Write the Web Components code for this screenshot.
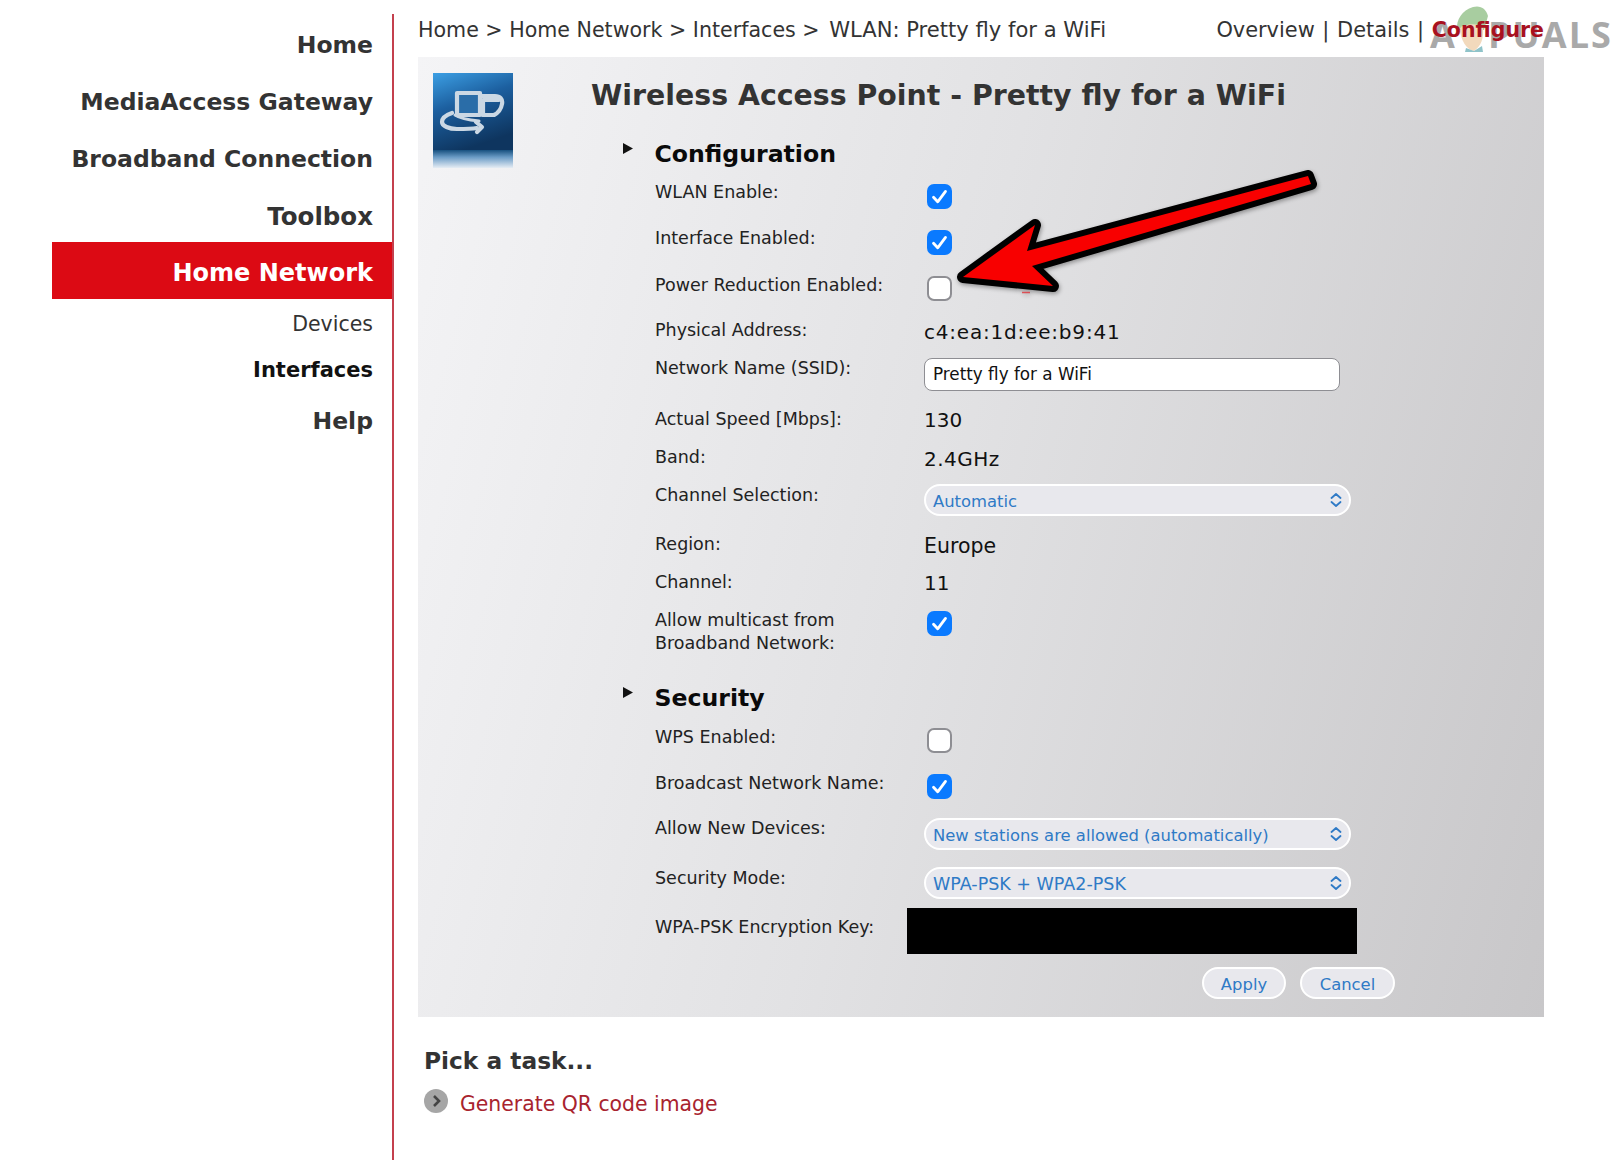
<!DOCTYPE html>
<html lang="en">
<head>
<meta charset="utf-8">
<title>Wireless Access Point</title>
<style>
  html, body { margin: 0; background: #fff; }
  body { font-family: "DejaVu Sans", Verdana, sans-serif; color: #222; }
</style>
</head>
<body>
<gw-app>
  <gw-nav slot="nav" size="big">Home</gw-nav>
  <gw-nav slot="nav" size="big">MediaAccess Gateway</gw-nav>
  <gw-nav slot="nav" size="big">Broadband Connection</gw-nav>
  <gw-nav slot="nav" size="big" style="font-size:24.5px">Toolbox</gw-nav>
  <gw-nav slot="nav" size="big" active style="font-size:24px">Home Network</gw-nav>
  <gw-nav slot="nav" size="sub">Devices</gw-nav>
  <gw-nav slot="nav" size="sub" current>Interfaces</gw-nav>
  <gw-nav slot="nav" size="big" style="line-height:61px">Help</gw-nav>

  <gw-topbar slot="top"></gw-topbar>

  <wifi-panel slot="main" title-text="Wireless Access Point - Pretty fly for a WiFi">
    <wifi-head style="margin-top:19px">Configuration</wifi-head>
    <wifi-row h="46" off="4" label="WLAN Enable:"><wifi-check checked></wifi-check></wifi-row>
    <wifi-row h="47" off="4" label="Interface Enabled:"><wifi-check checked></wifi-check></wifi-row>
    <wifi-row h="45" off="3" label="Power Reduction Enabled:"><wifi-check></wifi-check></wifi-row>
    <wifi-row h="38" off="3" label="Physical Address:"><wifi-value style="letter-spacing:.8px">c4:ea:1d:ee:b9:41</wifi-value></wifi-row>
    <wifi-row h="51" off="2" label="Network Name (SSID):"><wifi-text>Pretty fly for a WiFi</wifi-text></wifi-row>
    <wifi-row h="38" off="2" label="Actual Speed [Mbps]:"><wifi-value>130</wifi-value></wifi-row>
    <wifi-row h="38" off="3" label="Band:"><wifi-value style="letter-spacing:.5px">2.4GHz</wifi-value></wifi-row>
    <wifi-row h="49" off="1" label="Channel Selection:"><wifi-select>Automatic</wifi-select></wifi-row>
    <wifi-row h="38" off="3" label="Region:"><wifi-value style="font-size:20.5px">Europe</wifi-value></wifi-row>
    <wifi-row h="38" off="2" label="Channel:"><wifi-value>11</wifi-value></wifi-row>
    <wifi-row h="73" off="3" label="Allow multicast from Broadband Network:"><wifi-check checked></wifi-check></wifi-row>

    <wifi-head style="margin-bottom:10px">Security</wifi-head>
    <wifi-row h="46" off="3" label="WPS Enabled:"><wifi-check></wifi-check></wifi-row>
    <wifi-row h="45" off="3" label="Broadcast Network Name:"><wifi-check checked></wifi-check></wifi-row>
    <wifi-row h="50" off="2" label="Allow New Devices:"><wifi-select>New stations are allowed (automatically)</wifi-select></wifi-row>
    <wifi-row h="49" off="1" label="Security Mode:"><wifi-select style="font-size:17.5px">WPA-PSK + WPA2-PSK</wifi-select></wifi-row>
    <wifi-row h="52" off="0" label="WPA-PSK Encryption Key:"><wifi-redact></wifi-redact></wifi-row>

    <wifi-actions>
      <wifi-button w="84">Apply</wifi-button>
      <wifi-button w="95">Cancel</wifi-button>
    </wifi-actions>
  </wifi-panel>

  <gw-tasks slot="main" heading="Pick a task...">Generate QR code image</gw-tasks>
</gw-app>

<script>
// shell: sidebar with the red rule, and the main column
class GwApp extends HTMLElement {
  constructor() {
    super();
    this.attachShadow({ mode: 'open' });
    this.shadowRoot.innerHTML = `
      <style>
        :host { display: grid; grid-template-columns: 394px 1225px; padding-top: 14px; height: 1158px; overflow: hidden; width: 1619px; }
        .side { box-sizing: border-box; height: 1146px; margin-left: 52px; border-right: 2px solid #c4404e; }
        .main { padding: 0 75px 0 24px; }
      </style>
      <div class="side"><slot name="nav"></slot></div>
      <div class="main"><slot name="top"></slot><slot name="main"></slot></div>
    `;
  }
}
customElements.define('gw-app', GwApp);

class GwNav extends HTMLElement {
  constructor() {
    super();
    this.attachShadow({ mode: 'open' });
    this.shadowRoot.innerHTML = `
      <style>
        :host { display: block; box-sizing: border-box; height: 57px; line-height: 63px; padding-right: 19px; text-align: right; font-size: 23.5px; font-weight: 700; color: #333; white-space: nowrap; }
        :host([size="sub"]) { height: 46px; line-height: 51px; font-size: 20.5px; font-weight: 400; }
        :host([current]) { font-size: 21px; font-weight: 700; color: #111; }
        :host([active]) { background: #dc0a14; color: #fff; line-height: 62px; }
      </style>
      <slot></slot>
    `;
  }
}
customElements.define('gw-nav', GwNav);

class GwTopbar extends HTMLElement {
  constructor() {
    super();
    this.attachShadow({ mode: 'open' });
    this.shadowRoot.innerHTML = `
      <style>
        :host { display: flex; justify-content: space-between; position: relative; height: 43px; font-size: 20.6px; line-height: 32px; color: #333; white-space: nowrap; }
        b { color: #a8111f; position: relative; font-size: 20.5px; }
        .last { font-size: 21.1px; margin-left: 3px; }
        .mark { position: absolute; left: 1012px; top: -14px; width: 189px; height: 60px; display: block; }
        .mark span { position: absolute; top: 10px; font: 700 36px/50px "Open Sans", sans-serif; color: #a9a9a9; }
        .mark svg { position: absolute; left: 20px; top: 4px; }
        .links { position: relative; font-size: 20.9px; word-spacing: 1px; }
      </style>
      <div>Home &gt; Home Network &gt; Interfaces &gt; <span class="last">WLAN: Pretty fly for a WiFi</span></div>
      <div class="mark">
        <span style="left:0">A</span>
        <svg width="48" height="50" viewBox="0 0 48 50">
          <path d="M7 26C6 16 12 6 23 3c8-2 13 2 15 9l-4 14z" fill="#a8cda0"/>
          <path d="M10 24c6-5 19-5 23 0 1 10-2 18-9 23-7-1-14-11-14-23z" fill="#f2d9bc"/>
          <path d="M16 44l8 3 8-5 1 6H15z" fill="#8fc3c9"/>
        </svg>
        <span style="left:58px;letter-spacing:2px">PUALS</span>
      </div>
      <div class="links">Overview | Details | <b>Configure</b></div>
    `;
  }
}
customElements.define('gw-topbar', GwTopbar);

// grey box with the icon, title, form and the big annotation arrow
class WifiPanel extends HTMLElement {
  constructor() {
    super();
    this.attachShadow({ mode: 'open' });
    this.shadowRoot.innerHTML = `
      <style>
        :host { display: grid; grid-template-columns: 80px 1fr; column-gap: 79px; position: relative; box-sizing: border-box; width: 1126px; height: 960px; padding: 16px 149px 0 15px; background: linear-gradient(105deg, #f4f4f6 0%, #e2e2e4 45%, #c8c7c9 100%); }
        h1 { margin: 0 0 0 -1px; font-size: 28.4px; line-height: 45px; font-weight: 700; color: #333; white-space: nowrap; }
        .icon { display: block; }
        .icon g { filter: blur(.5px); }
        .arrow { position: absolute; left: 532px; top: 108px; filter: drop-shadow(1px 2px 2px rgba(0,0,0,.35)); }
      </style>
      <svg class="icon" width="80" height="95" viewBox="0 0 80 95">
        <defs>
          <linearGradient id="bg" x1="0" y1="0" x2="0.35" y2="1">
            <stop offset="0" stop-color="#3c9fe4"/><stop offset=".45" stop-color="#1c5f9f"/><stop offset="1" stop-color="#0e355f"/>
          </linearGradient>
          <linearGradient id="fade" x1="0" y1="0" x2="0" y2="1">
            <stop offset="0" stop-color="#17507f"/><stop offset=".4" stop-color="#6b9cc6"/><stop offset="1" stop-color="#e6edf4"/>
          </linearGradient>
        </defs>
        <rect width="80" height="78" fill="url(#bg)"/>
        <rect y="77" width="80" height="18" fill="url(#fade)"/>
        <g fill="none" stroke="#cbd8e4" stroke-width="4.2" stroke-linejoin="round" stroke-linecap="round">
          <path d="M24 20h23v22H24z" fill="#2a6da8"/>
          <path d="M48 23h14c5 0 8 3 7 8-1 6-4 9-8 11H50"/>
          <path d="M51 27h15M50 27v15"/>
          <path d="M19 40c-6 2-10 5-10 9s7 7 15 7c8 0 14 0 20-1"/>
          <path d="M22 42c6 4 14 5 24 6" stroke-width="3"/>
          <path d="M43 49l6 5-5 5"/>
        </g>
      </svg>
      <div>
        <h1></h1>
        <slot></slot>
      </div>
      <svg class="arrow" width="370" height="130" viewBox="950 165 370 130">
        <path d="M1022 292.5l8 0" stroke="#e0323a" stroke-width="1.5" opacity=".8"/>
        <path d="M963 277L1035 225L1027 251L1308 176L1311 184L1032 266L1053 286Z" fill="#f80000" stroke="#000" stroke-width="12" stroke-linejoin="round" paint-order="stroke"/>
      </svg>
    `;
  }
  connectedCallback() {
    this.shadowRoot.querySelector('h1').textContent = this.getAttribute('title-text') || '';
  }
}
customElements.define('wifi-panel', WifiPanel);

class WifiHead extends HTMLElement {
  constructor() {
    super();
    this.attachShadow({ mode: 'open' });
    this.shadowRoot.innerHTML = `
      <style>
        :host { display: flex; gap: 21.5px; height: 34px; margin-left: 31px; margin-bottom: 9px; font-size: 23.6px; line-height: 35px; font-weight: 700; color: #0a0a0a; }
        i { width: 10px; height: 11px; margin-top: 6px; background: #111; clip-path: polygon(0 0, 100% 50%, 0 100%); }
      </style>
      <i></i><span><slot></slot></span>
    `;
  }
}
customElements.define('wifi-head', WifiHead);

class WifiRow extends HTMLElement {
  constructor() {
    super();
    this.attachShadow({ mode: 'open' });
    this.shadowRoot.innerHTML = `
      <style>
        :host { display: grid; grid-template-columns: 269px 1fr; height: var(--h); margin-left: 63px; font-size: 17.5px; line-height: 23px; color: #222; }
        .label { padding: 1px 30px 0 0; }
        .val { padding-top: var(--off); min-width: 0; }
      </style>
      <div class="label"></div>
      <div class="val"><slot></slot></div>
    `;
  }
  connectedCallback() {
    this.style.setProperty('--h', this.getAttribute('h') + 'px');
    this.style.setProperty('--off', this.getAttribute('off') + 'px');
    this.shadowRoot.querySelector('.label').textContent = this.getAttribute('label');
  }
}
customElements.define('wifi-row', WifiRow);

class WifiCheck extends HTMLElement {
  constructor() {
    super();
    this.attachShadow({ mode: 'open' });
    this.shadowRoot.innerHTML = `
      <style>
        :host { display: block; box-sizing: border-box; width: 25px; height: 25px; margin-left: 3px; background: #fff; border: 2px solid #8e8e93; border-radius: 7px; }
        :host([checked]) { background: #0a7aff; border-color: #0a7aff; }
        svg { display: none; position: relative; left: -2px; top: -2px; }
        :host([checked]) svg { display: block; }
      </style>
      <svg width="25" height="25" viewBox="0 0 25 25"><path d="M6.5 13.2l4.2 4.6L18.5 7.4" fill="none" stroke="#fff" stroke-width="2.8" stroke-linecap="round" stroke-linejoin="round"/></svg>
    `;
  }
}
customElements.define('wifi-check', WifiCheck);

class WifiValue extends HTMLElement {
  constructor() {
    super();
    this.attachShadow({ mode: 'open' });
    this.shadowRoot.innerHTML = `
      <style>:host { display: block; font-size: 20px; line-height: 23px; color: #111; white-space: nowrap; }</style>
      <slot></slot>
    `;
  }
}
customElements.define('wifi-value', WifiValue);

class WifiText extends HTMLElement {
  constructor() {
    super();
    this.attachShadow({ mode: 'open' });
    this.shadowRoot.innerHTML = `
      <style>:host { display: block; box-sizing: border-box; width: 416px; height: 33px; padding-left: 8px; background: #fff; border: 1.5px solid #8e8e93; border-radius: 8px; font-size: 16.8px; line-height: 31px; color: #111; white-space: nowrap; }</style>
      <slot></slot>
    `;
  }
}
customElements.define('wifi-text', WifiText);

class WifiSelect extends HTMLElement {
  constructor() {
    super();
    this.attachShadow({ mode: 'open' });
    this.shadowRoot.innerHTML = `
      <style>
        :host { display: flex; align-items: center; justify-content: space-between; box-sizing: border-box; width: 427px; height: 32px; padding: 0 7px 0 7px; background: #e8e8ed; border: 2px solid #fff; border-radius: 16px; font-size: 16.4px; color: #2f7ac6; white-space: nowrap; }
        span { padding-top: 2px; }
        svg { display: block; }
      </style>
      <span><slot></slot></span>
      <svg width="12" height="14" viewBox="0 0 12 14"><path d="M1.5 5L6 1l4.5 4M1.5 9L6 13l4.5-4" fill="none" stroke="#2f7ac6" stroke-width="1.8" stroke-linecap="round" stroke-linejoin="round"/></svg>
    `;
  }
}
customElements.define('wifi-select', WifiSelect);

class WifiRedact extends HTMLElement {
  constructor() {
    super();
    this.attachShadow({ mode: 'open' });
    this.shadowRoot.innerHTML = `
      <style>:host { display: block; width: 450px; height: 46px; margin: -7px 0 0 -17px; background: #000; }</style>
    `;
  }
}
customElements.define('wifi-redact', WifiRedact);

class WifiActions extends HTMLElement {
  constructor() {
    super();
    this.attachShadow({ mode: 'open' });
    this.shadowRoot.innerHTML = `
      <style>:host { display: flex; justify-content: flex-end; gap: 14px; }</style>
      <slot></slot>
    `;
  }
}
customElements.define('wifi-actions', WifiActions);

class WifiButton extends HTMLElement {
  constructor() {
    super();
    this.attachShadow({ mode: 'open' });
    this.shadowRoot.innerHTML = `
      <style>:host { display: block; box-sizing: border-box; width: var(--w); height: 32px; background: #e8e8ed; border: 2px solid #fff; border-radius: 16px; text-align: center; font-size: 16.4px; line-height: 31px; color: #2f7ac6; }</style>
      <slot></slot>
    `;
  }
  connectedCallback() {
    this.style.setProperty('--w', this.getAttribute('w') + 'px');
  }
}
customElements.define('wifi-button', WifiButton);

class GwTasks extends HTMLElement {
  constructor() {
    super();
    this.attachShadow({ mode: 'open' });
    this.shadowRoot.innerHTML = `
      <style>
        :host { display: block; padding: 27px 0 0 6px; }
        h2 { margin: 0 0 11px; font-size: 23.3px; line-height: 34px; font-weight: 700; color: #333; }
        .link { display: flex; gap: 12px; font-size: 20.4px; line-height: 30px; color: #a8232e; }
        svg { display: block; }
      </style>
      <h2></h2>
      <div class="link">
        <svg width="24" height="24" viewBox="0 0 24 24"><circle cx="12" cy="12" r="12" fill="#a6a6a6"/><path d="M10 7l5 5-5 5" fill="none" stroke="#444" stroke-width="2.6"/></svg>
        <span><slot></slot></span>
      </div>
    `;
  }
  connectedCallback() {
    this.shadowRoot.querySelector('h2').textContent = this.getAttribute('heading') || '';
  }
}
customElements.define('gw-tasks', GwTasks);
</script>
</body>
</html>
